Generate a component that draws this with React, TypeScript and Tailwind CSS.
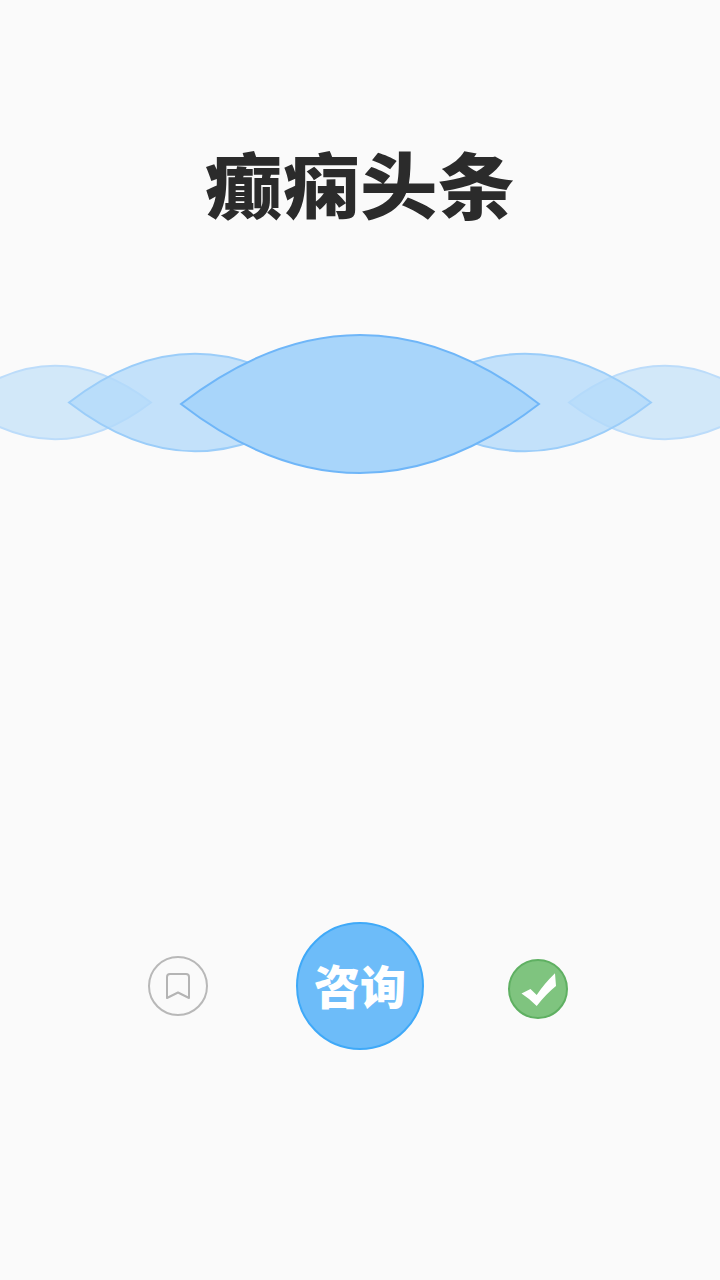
export default function App() {
  const font = { fontFamily: '"Noto Sans CJK SC", "Noto Sans CJK JP", sans-serif' };
  return (
    <div className="w-[720px] h-[1280px] bg-[#fafafa] flex flex-col items-center overflow-hidden" style={font}>
      <h1 className="mt-[130px] h-[104px] leading-[104px] text-[77.5px] font-black text-[#2b2b2b] whitespace-nowrap scale-y-[0.92]">癫痫头条</h1>
      <svg className="mt-[91px] block shrink-0" width="720" height="160" viewBox="0 325 720 160" fill="none">
        <path d="M-41 402.5 Q55 329 151 402.5 Q55 476 -41 402.5Z" fill="#d2e8f9" stroke="#bcdcfa" strokeWidth="2" />
        <path d="M761 402.5 Q665 329 569 402.5 Q665 476 761 402.5Z" fill="#d2e8f9" stroke="#bcdcfa" strokeWidth="2" />
        <path d="M69 402.5 Q195 305 321 402.5 Q195 500 69 402.5Z" fill="#b2d9fa" fillOpacity="0.76" stroke="#9bcdf9" strokeWidth="2" />
        <path d="M651 402.5 Q525 305 399 402.5 Q525 500 651 402.5Z" fill="#b2d9fa" fillOpacity="0.76" stroke="#9bcdf9" strokeWidth="2" />
        <path d="M181 404 Q360 266 539 404 Q360 542 181 404Z" fill="#a8d5fa" stroke="#6fb6f8" strokeWidth="2" />
      </svg>
      <div className="mt-[437px] pr-[4px] flex items-center h-[128px] shrink-0">
        <div className="w-[60px] h-[60px] rounded-full border-2 border-[#b8b8b8] flex items-center justify-center shrink-0">
          <svg width="26" height="28" viewBox="0 0 26 28" fill="none">
            <path d="M2 26 V5 Q2 2 5 2 H21 Q24 2 24 5 V26 L13 20.5 Z" stroke="#b4b4b4" strokeWidth="2" strokeLinejoin="round" />
          </svg>
        </div>
        <button className="ml-[88px] w-[128px] h-[128px] pb-[4px] rounded-full bg-[#6dbcf9] border-2 border-[#3fa9f8] flex items-center justify-center text-white text-[46px] font-black leading-none shrink-0 whitespace-nowrap">咨询</button>
        <div className="ml-[84px] mt-[6px] w-[60px] h-[60px] rounded-full bg-[#7fc47f] border-2 border-[#5fb062] shrink-0 relative">
          <svg className="absolute -left-[2px] -top-[2px]" width="60" height="60" viewBox="0 0 60 60">
            <path d="M13.5 34.5 L22.5 30 L28.7 36 Q36 25 47 14.3 L48 27 Q38 35 28.7 47 Q22 40 13.5 34.5Z" fill="#ffffff" />
          </svg>
        </div>
      </div>
    </div>
  );
}
